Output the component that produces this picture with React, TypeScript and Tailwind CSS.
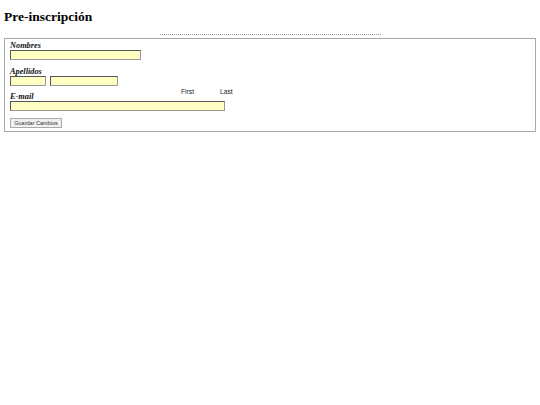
import React from "react";

const inputCls =
  "block h-[10px] bg-[#ffffc4] border border-t-[#555] border-l-[#555] border-b-[#999] border-r-[#999]";

const labelCls =
  "block h-[9px] leading-[9px] text-[8.3px] font-bold italic text-[#111] [font-family:'Liberation_Serif',serif]";

export default function App() {
  return (
    <div className="w-[540px] h-[405px] bg-white px-[4px] [font-family:'Liberation_Sans',sans-serif]">
      <h1 className="pt-[9px] h-[26px] text-[13.5px] leading-[15px] font-bold text-black [font-family:'Liberation_Serif',serif]">
        Pre-inscripción
      </h1>
      <div className="mt-[8px] ml-[156px] w-[221px] border-t border-dotted border-[#999]" />
      <div className="mt-[3px] w-[532px] h-[94px] border border-[#a8a8a8] px-[5px] pt-[2px]">
        <span className={labelCls}>Nombres</span>
        <div className={`${inputCls} w-[131px]`} />
        <span className={`${labelCls} mt-[7px]`}>Apellidos</span>
        <div className="flex gap-[4px]">
          <div className={`${inputCls} w-[36px]`} />
          <div className={`${inputCls} w-[68px]`} />
        </div>
        <div className="mt-[2px] flex h-[13px]">
          <span className={`${labelCls} mt-[4px] w-[171px]`}>E-mail</span>
          <span className="w-[39px] h-[8px] text-[6.7px] leading-[8px] text-[#222]">First</span>
          <span className="h-[8px] text-[6.7px] leading-[8px] text-[#222]">Last</span>
        </div>
        <div className={`${inputCls} w-[215px]`} />
        <button className="mt-[7px] flex items-center justify-center w-[52px] h-[10px] bg-[#f0f0f0] border border-[#aaa] text-[5.5px] leading-[8px] text-[#333]">
          Guardar Cambios
        </button>
      </div>
    </div>
  );
}
